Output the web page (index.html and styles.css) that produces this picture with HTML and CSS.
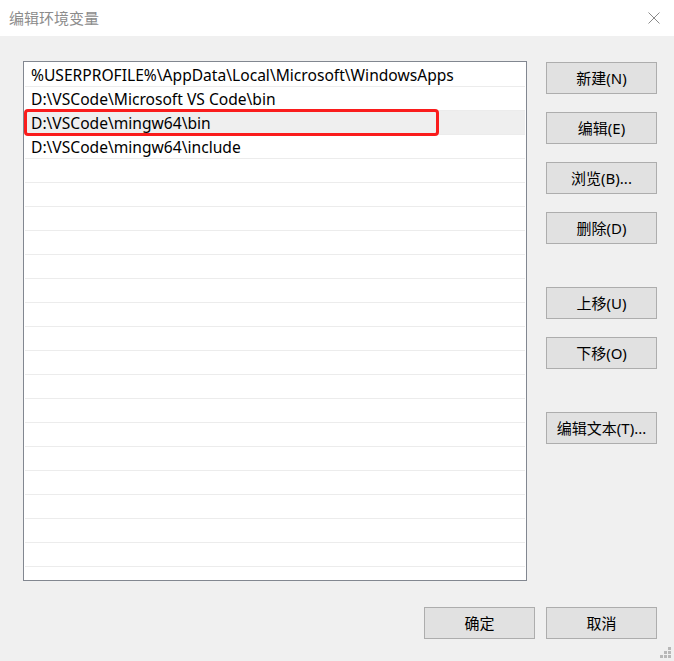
FILE: index.html
```html
<!DOCTYPE html>
<html lang="zh-CN">
<head>
<meta charset="utf-8">
<title>编辑环境变量</title>
<link rel="stylesheet" href="styles.css">
</head>
<body>
<div class="window">
  <div class="titlebar">
    <span class="title">编辑环境变量</span>
    <svg class="close" width="12" height="12" viewBox="0 0 12 12"><path d="M0.5 0.5 L11.5 11.5 M11.5 0.5 L0.5 11.5" stroke="#8a8a8a" stroke-width="1" fill="none"/></svg>
  </div>
  <div class="body">
    <div class="main">
      <div class="listbox">
        <div class="row">%USERPROFILE%\AppData\Local\Microsoft\WindowsApps</div>
        <div class="row">D:\VSCode\Microsoft VS Code\bin</div>
        <div class="row selected">D:\VSCode\mingw64\bin<span class="mark"></span></div>
        <div class="row">D:\VSCode\mingw64\include</div>
        <div class="row"></div><div class="row"></div><div class="row"></div><div class="row"></div>
        <div class="row"></div><div class="row"></div><div class="row"></div><div class="row"></div>
        <div class="row"></div><div class="row"></div><div class="row"></div><div class="row"></div>
        <div class="row"></div><div class="row"></div><div class="row"></div><div class="row"></div>
        <div class="row"></div><div class="row last"></div>
      </div>
      <div class="side">
        <div class="group">
          <button class="btn">新建(N)</button>
          <button class="btn">编辑(E)</button>
          <button class="btn">浏览(B)...</button>
          <button class="btn">删除(D)</button>
        </div>
        <div class="group">
          <button class="btn">上移(U)</button>
          <button class="btn">下移(O)</button>
        </div>
        <div class="group">
          <button class="btn">编辑文本(T)...</button>
        </div>
      </div>
    </div>
    <div class="footer">
      <button class="btn">确定</button>
      <button class="btn">取消</button>
    </div>
    <svg class="grip" width="12" height="12" viewBox="0 0 12 12">
      <g fill="#b8b8b8">
        <rect x="8" y="0" width="3" height="3"/>
        <rect x="4" y="4" width="3" height="3"/><rect x="8" y="4" width="3" height="3"/>
        <rect x="0" y="8" width="3" height="3"/><rect x="4" y="8" width="3" height="3"/><rect x="8" y="8" width="3" height="3"/>
      </g>
    </svg>
  </div>
</div>
</body>
</html>
```
FILE: styles.css
```css
* { box-sizing: border-box; }
html, body { margin: 0; padding: 0; }
body {
  width: 674px;
  height: 661px;
  background: #f0f0f0;
  font-family: "Noto Sans", "Noto Sans CJK SC", sans-serif;
  overflow: hidden;
}
.window { position: relative; width: 674px; height: 661px; }
.titlebar {
  height: 36px;
  background: #ffffff;
  display: flex;
  align-items: center;
  justify-content: space-between;
  padding: 0 14px 2px 9px;
}
.title {
  font-family: "Noto Sans CJK SC", sans-serif;
  font-size: 15px;
  color: #8c8c8c;
}
.close { display: block; margin-top: 1px; }
.body { position: relative; height: 625px; }
.main {
  display: flex;
  padding: 25px 0 0 23px;
  gap: 19px;
}
.listbox {
  width: 504px;
  height: 520px;
  background: #fff;
  border: 1px solid #828790;
  padding: 1px 1px 0 1px;
  overflow: hidden;
}
.row {
  position: relative;
  height: 24px;
  border-bottom: 1px solid #ececec;
  font-size: 15.6px;
  line-height: 24px;
  padding-left: 6px;
  color: #000;
  white-space: nowrap;
}
.row.selected { background: #efefef; }
.row.last { border-bottom: none; }
.mark {
  position: absolute;
  left: -1px;
  top: -2px;
  width: 415px;
  height: 27px;
  border: 3px solid #fa1c1c;
  border-radius: 4px;
}
.side {
  display: flex;
  flex-direction: column;
  gap: 43px;
  padding-top: 1px;
}
.group { display: flex; flex-direction: column; gap: 18px; }
.btn {
  width: 111px;
  height: 32px;
  background: #e1e1e1;
  border: 1px solid #adadad;
  border-radius: 0;
  font-family: "Noto Sans", "Noto Sans CJK SC", sans-serif;
  font-size: 15px;
  color: #000;
  padding: 0;
  margin: 0;
  line-height: 30px;
}
.footer {
  display: flex;
  justify-content: flex-end;
  gap: 11px;
  padding: 26px 17px 0 0;
}
.grip { position: absolute; right: 2px; bottom: 2px; }
```
